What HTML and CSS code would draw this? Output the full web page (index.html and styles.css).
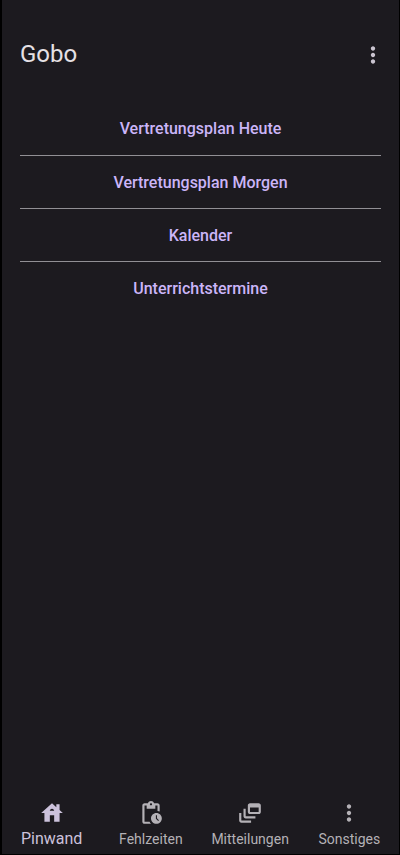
FILE: index.html
```html
<!DOCTYPE html>
<html lang="de">
<head>
  <title>Gobo</title>
  <meta charset="utf-8">
  <meta name="viewport" content="width=device-width, initial-scale=1">
  <link rel="stylesheet" href="styles.css">
</head>
<body>
  <header class="header">
    <h1 class="title">Gobo</h1>
    <button class="menu-button" type="button" aria-label="Menü">
      <svg class="icon" viewBox="0 0 24 24"><path d="M12 8c1.1 0 2-.9 2-2s-.9-2-2-2-2 .9-2 2 .9 2 2 2zm0 2c-1.1 0-2 .9-2 2s.9 2 2 2 2-.9 2-2-.9-2-2-2zm0 6c-1.1 0-2 .9-2 2s.9 2 2 2 2-.9 2-2-.9-2-2-2z"/></svg>
    </button>
  </header>

  <main class="board">
    <button class="board-item" type="button">Vertretungsplan Heute</button>
    <button class="board-item" type="button">Vertretungsplan Morgen</button>
    <button class="board-item" type="button">Kalender</button>
    <button class="board-item" type="button">Unterrichtstermine</button>
  </main>

  <nav class="tabs">
    <a class="tab tab-active" href="#pinwand">
      <svg class="icon" viewBox="0 0 24 24"><path d="M19 9.3V4h-3v2.6L12 3 2 12h3v8h5v-6h4v6h5v-8h3l-3-2.7zM10 10c0-1.1.9-2 2-2s2 .9 2 2h-4z"/></svg>
      <span class="tab-title">Pinwand</span>
    </a>
    <a class="tab" href="#fehlzeiten">
      <svg class="icon" viewBox="0 0 24 24"><path d="M17 12c-2.76 0-5 2.24-5 5s2.24 5 5 5 5-2.24 5-5-2.24-5-5-5zm1.65 7.35L16.5 17.2V14h1v2.79l1.85 1.85-.7.71zM18 3h-3.18C14.4 1.84 13.3 1 12 1s-2.4.84-2.82 2H6c-1.1 0-2 .9-2 2v15c0 1.1.9 2 2 2h6.11c-.59-.57-1.07-1.25-1.42-2H6V5h2v3h8V5h2v5.08c.71.1 1.38.31 2 .6V5c0-1.1-.9-2-2-2zm-6 2c-.55 0-1-.45-1-1s.45-1 1-1 1 .45 1 1-.45 1-1 1z"/></svg>
      <span class="tab-title">Fehlzeiten</span>
    </a>
    <a class="tab" href="#mitteilungen">
      <svg class="icon" viewBox="0 0 24 24"><path d="M8 8H6v7c0 1.1.9 2 2 2h9v-2H8V8z"/><path d="M20 3h-8c-1.1 0-2 .9-2 2v6c0 1.1.9 2 2 2h8c1.1 0 2-.9 2-2V5c0-1.1-.9-2-2-2zm0 8h-8V7h8v4z"/><path d="M4 12H2v7c0 1.1.9 2 2 2h9v-2H4v-7z"/></svg>
      <span class="tab-title">Mitteilungen</span>
    </a>
    <a class="tab" href="#sonstiges">
      <svg class="icon" viewBox="0 0 24 24"><path d="M12 8c1.1 0 2-.9 2-2s-.9-2-2-2-2 .9-2 2 .9 2 2 2zm0 2c-1.1 0-2 .9-2 2s.9 2 2 2 2-.9 2-2-.9-2-2-2zm0 6c-1.1 0-2 .9-2 2s.9 2 2 2 2-.9 2-2-.9-2-2-2z"/></svg>
      <span class="tab-title">Sonstiges</span>
    </a>
  </nav>
</body>
</html>
```

FILE: styles.css
```css
*, *::before, *::after {
  margin: 0;
  box-sizing: border-box;
}

body {
  display: flex;
  flex-direction: column;
  min-height: 100vh;
  border: solid #000000;
  border-width: 0 1px 1px 2px;
  background-color: #1C1A1F;
  color: #E6E1E5;
  font-family: Roboto, sans-serif;
}

button {
  border: 0;
  padding: 0;
  background: none;
  color: inherit;
  font-family: inherit;
  cursor: pointer;
}

.icon {
  display: block;
  width: 26px;
  height: 26px;
  fill: currentColor;
}

.header {
  display: flex;
  align-items: center;
  justify-content: space-between;
  padding: 38px 13px 0 18px;
}

.title {
  font-size: 24px;
  font-weight: 400;
  line-height: 33px;
}

.menu-button {
  color: #CAC4D0;
}

.board {
  display: flex;
  flex: 1;
  flex-direction: column;
  padding: 31px 18px 0;
}

.board-item {
  height: 53px;
  color: #CBB5F8;
  font-size: 16px;
  font-weight: 500;
}

.board-item + .board-item {
  border-top: 1px solid #918F94;
}

.tabs {
  display: grid;
  grid-template-columns: repeat(4, 1fr);
  padding-bottom: 4px;
}

.tab {
  display: flex;
  flex-direction: column;
  align-items: center;
  gap: 3px;
  color: #B4B1B6;
  font-size: 14px;
  text-decoration: none;
}

.tab-title {
  line-height: 21px;
}

.tab-active {
  gap: 2px;
  color: #CCC2DC;
  font-size: 16px;
}
```
